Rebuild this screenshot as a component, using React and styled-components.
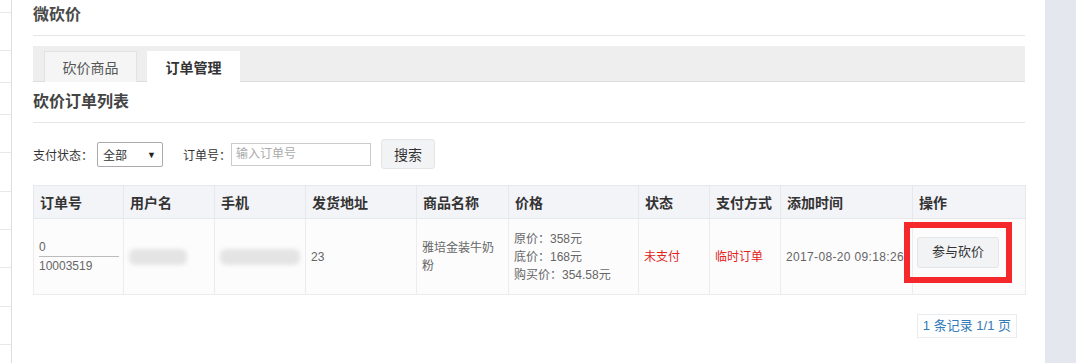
import React from 'react';
import styled, { createGlobalStyle } from 'styled-components';

const GlobalStyle = createGlobalStyle`
  html, body {
    margin: 0;
    padding: 0;
    background: #fff;
  }
  body {
    font-family: "Liberation Sans", "Noto Sans CJK SC", sans-serif;
    color: #666;
    font-size: 12px;
  }
`;

const Page = styled.div`
  display: flex;
  width: 1076px;
  height: 363px;
  overflow: hidden;
`;

const Sidebar = styled.ul`
  width: 11px;
  margin: 0;
  padding: 0;
  list-style: none;
  border-right: 1px solid #dcdde3;
  flex-shrink: 0;
`;

const SideItem = styled.li`
  height: ${p => p.h}px;
  border-bottom: 1px solid #e8e8e8;
  box-sizing: border-box;
`;

const Main = styled.div`
  width: 992px;
  margin: 0 20px 0 21px;
  flex-shrink: 0;
`;

const RightBar = styled.div`
  flex: 1;
  background: #e5e7ee;
`;

const Title = styled.h1`
  margin: 0;
  height: 36px;
  box-sizing: border-box;
  padding-top: 5px;
  font-size: 16px;
  font-weight: bold;
  color: #4a4a4a;
  border-bottom: 1px solid #e6e6e6;
  line-height: 20px;
`;

const TabBar = styled.div`
  margin-top: 10px;
  height: 36px;
  box-sizing: border-box;
  background: #eee;
  border-bottom: 1px solid #ddd;
  display: flex;
  align-items: flex-end;
  gap: 10px;
  padding-left: 11px;
`;

const Tab = styled.div`
  width: 93px;
  height: 31px;
  box-sizing: border-box;
  margin-bottom: -1px;
  display: flex;
  align-items: center;
  justify-content: center;
  font-size: 14px;
  color: ${p => (p.active ? '#333' : '#555')};
  font-weight: ${p => (p.active ? 'bold' : 'normal')};
  background: ${p => (p.active ? '#fff' : '#f5f5f5')};
  border: 1px solid ${p => (p.active ? '#fff' : '#e2e2e2')};
  border-bottom: none;
`;

const Heading = styled.h2`
  margin: 0;
  height: 41px;
  box-sizing: border-box;
  padding-top: 10px;
  font-size: 16px;
  line-height: 20px;
  font-weight: bold;
  color: #444;
  border-bottom: 1px solid #e6e6e6;
`;

const Filter = styled.div`
  height: 62px;
  display: flex;
  align-items: center;
  padding-top: 1px;
  box-sizing: border-box;
  color: #333;
`;

const Label = styled.span`
  font-size: 12px;
  margin-right: ${p => p.gap}px;
`;

const Select = styled.div`
  width: 66px;
  height: 25px;
  box-sizing: border-box;
  border: 1px solid #aaa;
  border-radius: 2px;
  display: flex;
  align-items: center;
  justify-content: space-between;
  padding: 0 6px 0 5px;
  color: #333;
  font-size: 12px;
  margin-right: 20px;
`;

const Caret = styled.span`
  font-size: 9px;
  color: #222;
`;

const Input = styled.div`
  width: 140px;
  height: 23px;
  box-sizing: border-box;
  border: 1px solid #ccc;
  color: #aaa;
  font-size: 12px;
  line-height: 21px;
  padding-left: 4px;
  margin-right: 10px;
`;

const Button = styled.div`
  height: 30px;
  padding: 0 12px;
  box-sizing: border-box;
  display: flex;
  align-items: center;
  justify-content: center;
  background: #f2f3f5;
  border: 1px solid #e4e5e8;
  border-radius: 3px;
  color: #333;
  font-size: 14px;
  margin-bottom: 2px;
`;

const Table = styled.table`
  width: 992px;
  border-collapse: collapse;
  table-layout: fixed;
`;

const Th = styled.th`
  height: 32px;
  padding: 0 6px;
  text-align: left;
  font-size: 14px;
  font-weight: bold;
  color: #333;
  background: #f3f4f8;
  border: 1px solid #e7e8ec;
`;

const Td = styled.td`
  height: 75px;
  padding: 0 5px;
  font-size: 12px;
  line-height: 18px;
  color: ${p => (p.red ? '#e2231a' : '#666')};
  border: 1px solid #ececec;
  background: #fcfcfd;
  vertical-align: middle;
  white-space: ${p => (p.nowrap ? 'nowrap' : 'normal')};
  letter-spacing: ${p => (p.nowrap ? '0.35px' : 'normal')};
  overflow: visible;
`;

const OrderTop = styled.div`
  width: 80px;
  border-bottom: 1px solid #bbb;
  line-height: 17px;
`;

const Blur = styled.div`
  width: ${p => p.w}px;
  height: 16px;
  background: #dcdcdc;
  filter: blur(2px);
  border-radius: 6px;
  opacity: 0.75;
`;

const Highlight = styled.div`
  width: 108px;
  height: 61px;
  box-sizing: border-box;
  border: 6px solid #f5282c;
  display: flex;
  align-items: center;
  justify-content: center;
  margin: -9px 0 0 -14px;
  position: relative;
`;

const ActionButton = styled(Button)`
  width: 82px;
  height: 31px;
  padding: 0;
  margin: 0;
  font-size: 13px;
`;

const Footer = styled.div`
  display: flex;
  justify-content: flex-end;
  padding: 19px 8px 0 0;
`;

const Pager = styled.div`
  height: 22px;
  padding: 0 5px;
  border: 1px solid #e9ecef;
  color: #337ab7;
  font-size: 13px;
  line-height: 21px;
`;

const sideHeights = [13, 38, 32, 32, 38, 39, 38, 38, 39, 38];

const columns = [
  ['订单号', 90],
  ['用户名', 91],
  ['手机', 91],
  ['发货地址', 111],
  ['商品名称', 92],
  ['价格', 130],
  ['状态', 71],
  ['支付方式', 71],
  ['添加时间', 132],
  ['操作', 113],
];

export default function App() {
  return (
    <Page>
      <GlobalStyle />
      <Sidebar>
        {sideHeights.map((h, i) => (
          <SideItem key={i} h={h} />
        ))}
      </Sidebar>
      <Main>
        <Title>微砍价</Title>
        <TabBar>
          <Tab>砍价商品</Tab>
          <Tab active>订单管理</Tab>
        </TabBar>
        <Heading>砍价订单列表</Heading>
        <Filter>
          <Label gap={4}>支付状态：</Label>
          <Select>
            全部<Caret>▼</Caret>
          </Select>
          <Label gap={0}>订单号：</Label>
          <Input>输入订单号</Input>
          <Button>搜索</Button>
        </Filter>
        <Table>
          <colgroup>
            {columns.map(([name, w]) => (
              <col key={name} style={{ width: w }} />
            ))}
          </colgroup>
          <thead>
            <tr>
              {columns.map(([name]) => (
                <Th key={name}>{name}</Th>
              ))}
            </tr>
          </thead>
          <tbody>
            <tr>
              <Td>
                <OrderTop>0</OrderTop>
                10003519
              </Td>
              <Td>
                <Blur w={58} />
              </Td>
              <Td>
                <Blur w={80} />
              </Td>
              <Td>23</Td>
              <Td>雅培金装牛奶粉</Td>
              <Td>
                原价：358元
                <br />
                底价：168元
                <br />
                购买价：354.58元
              </Td>
              <Td red>未支付</Td>
              <Td red>临时订单</Td>
              <Td nowrap>2017-08-20 09:18:26</Td>
              <Td>
                <Highlight>
                  <ActionButton>参与砍价</ActionButton>
                </Highlight>
              </Td>
            </tr>
          </tbody>
        </Table>
        <Footer>
          <Pager>1 条记录 1/1 页</Pager>
        </Footer>
      </Main>
      <RightBar />
    </Page>
  );
}
